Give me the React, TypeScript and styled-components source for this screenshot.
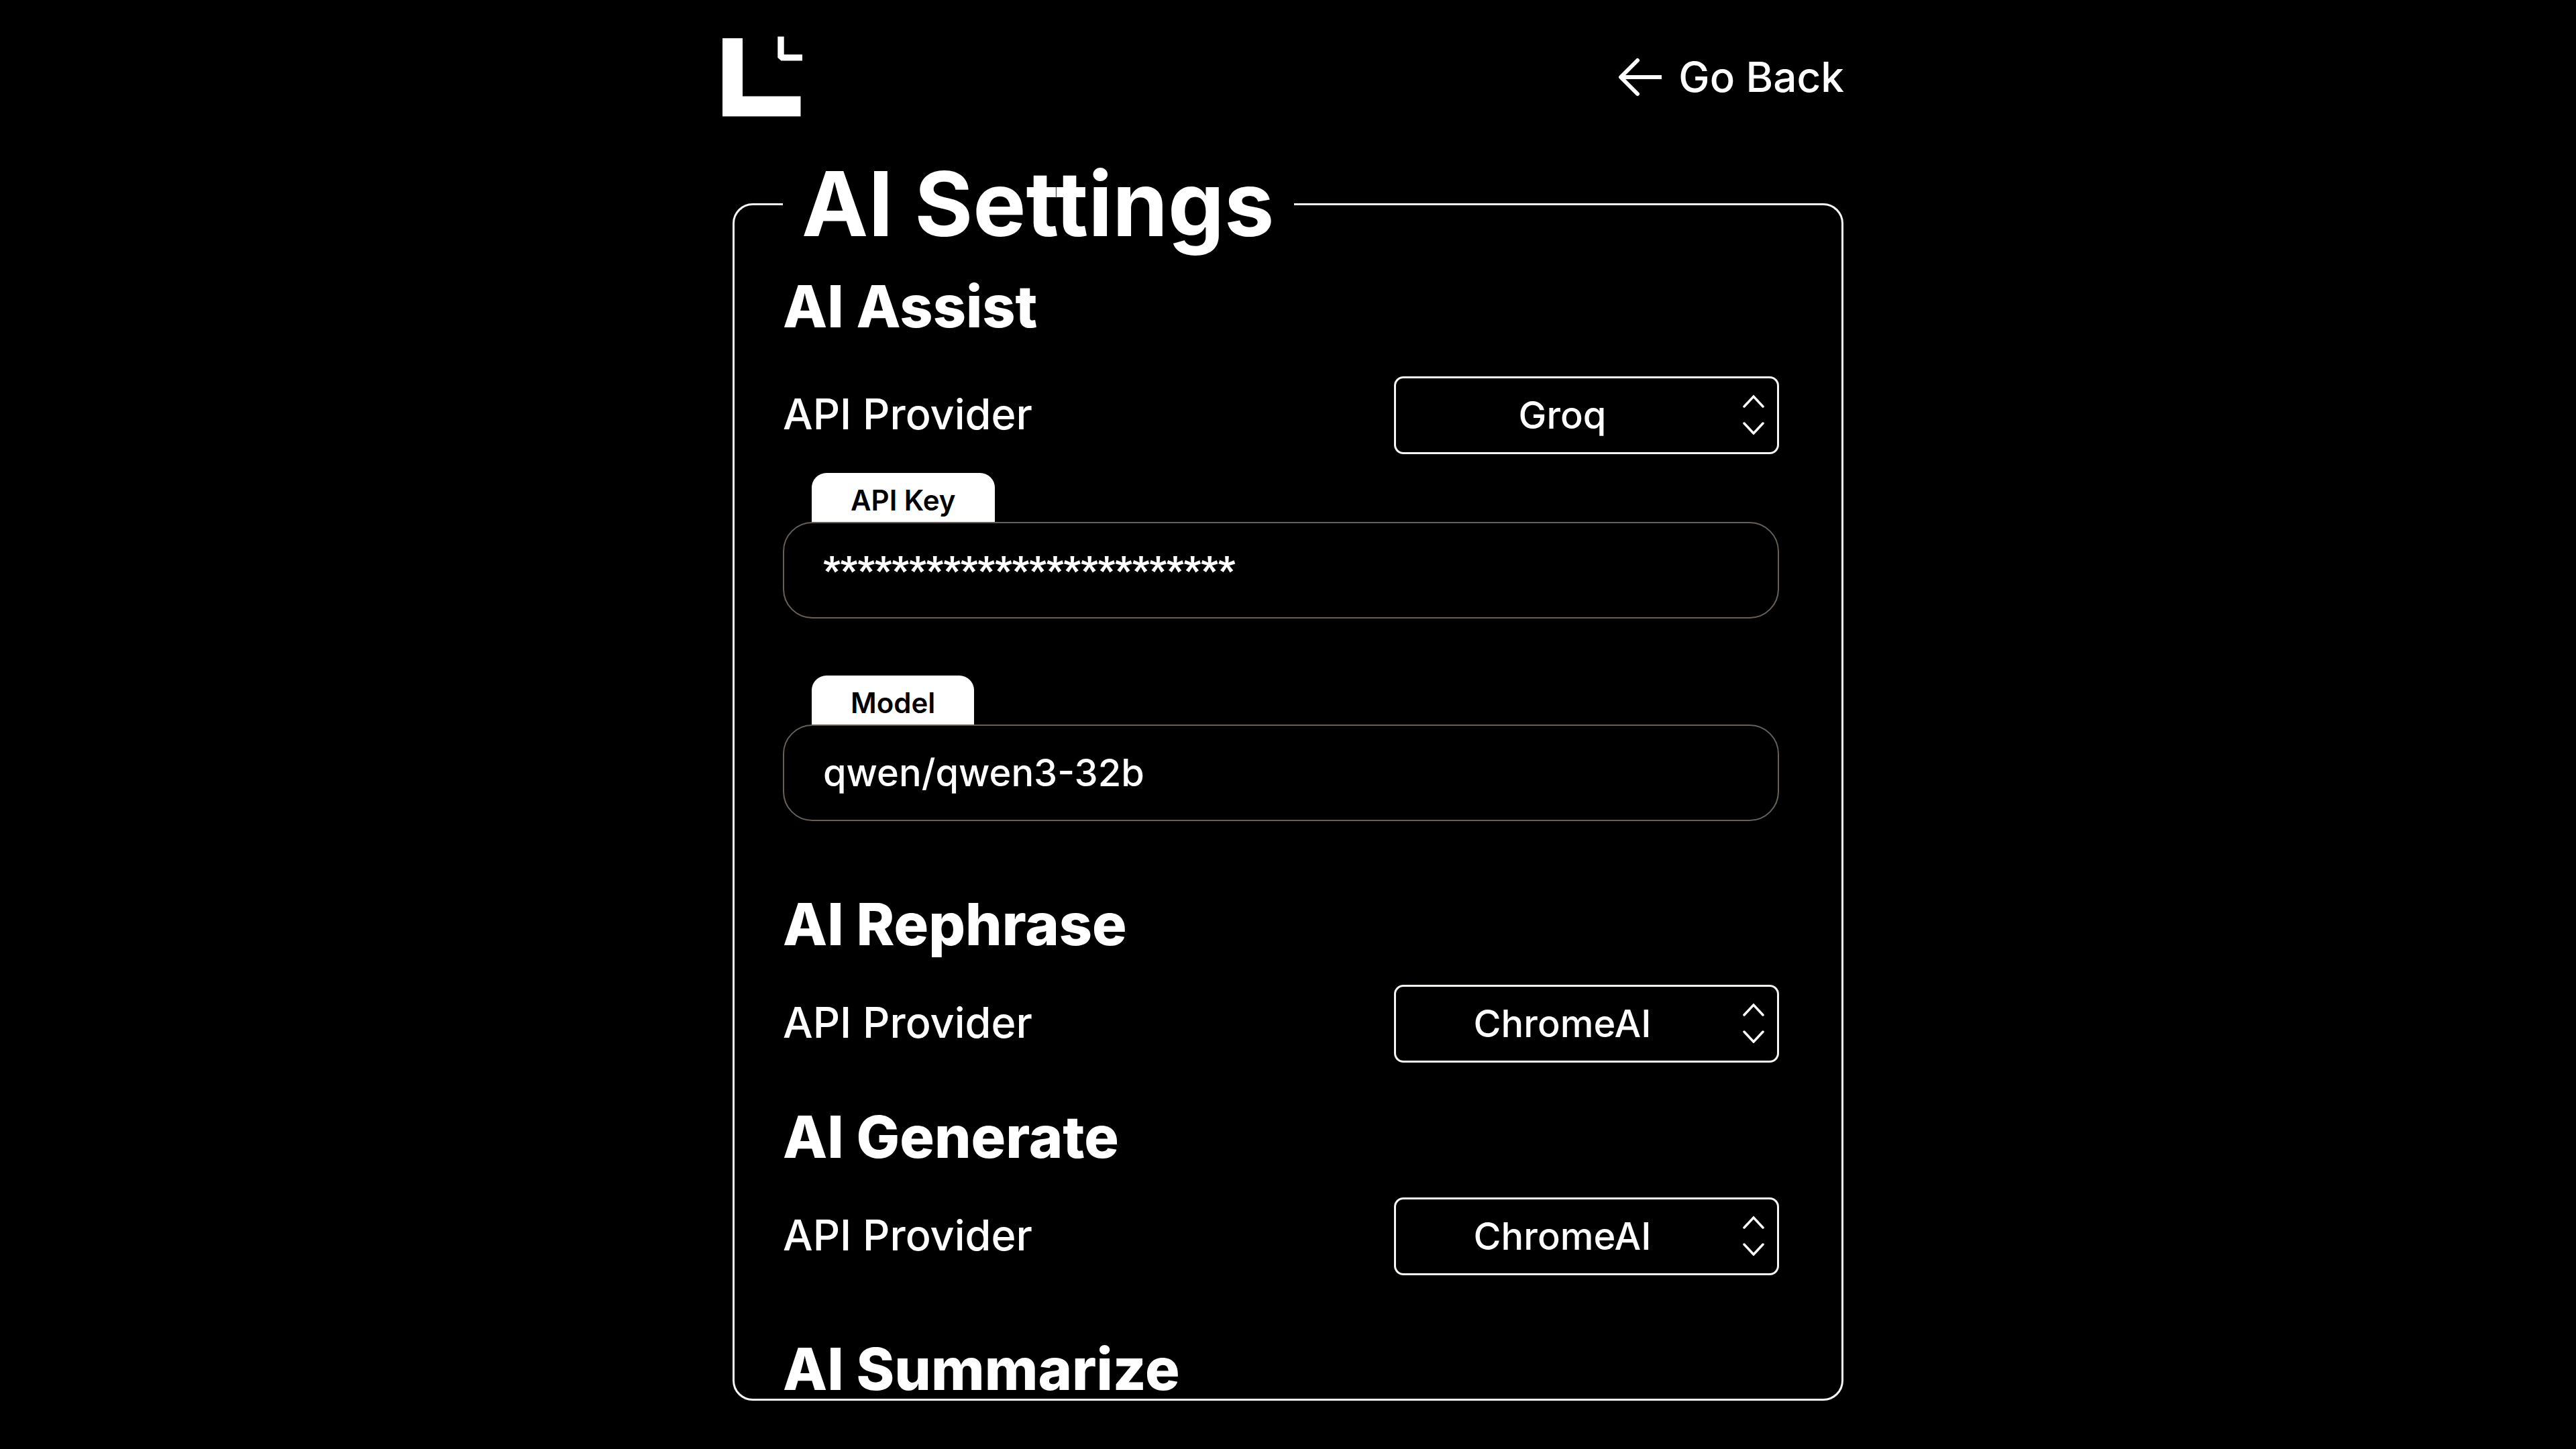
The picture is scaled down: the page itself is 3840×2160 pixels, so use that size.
import React, { useId, useState } from "react";
import styled, { createGlobalStyle } from "styled-components";

const GlobalStyle = createGlobalStyle`
  *, *::before, *::after { box-sizing: border-box; }
  body {
    margin: 0;
    background: #000;
    color: #fff;
    font-family: Inter, Roboto, sans-serif;
  }
`;

const Page = styled.div`
  display: flex;
  flex-direction: column;
  align-items: center;
  height: 100vh;
  padding-bottom: 72px;
  overflow: hidden;
`;

const Header = styled.header`
  display: flex;
  align-items: center;
  justify-content: space-between;
  flex: none;
  width: 100%;
  max-width: 1686px;
  padding: 54px 14px 48px 0;
`;

const LogoLink = styled.a`
  display: flex;
  color: inherit;
`;

const BackButton = styled.button`
  display: flex;
  align-items: center;
  gap: 24px;
  padding: 0;
  border: 0;
  background: none;
  color: inherit;
  font: 500 62px/80px Inter, Roboto, sans-serif;
  cursor: pointer;
`;

const Frame = styled.fieldset`
  display: flex;
  flex-direction: column;
  flex: 1;
  width: 100%;
  max-width: 1656px;
  min-width: 0;
  min-height: 0;
  margin: 0;
  padding: 0 0 0 72px;
  border: 3px solid #f6f6f2;
  border-radius: 30px;
`;

const Title = styled.legend`
  padding: 0 29px 0 28px;
  font-size: 133px;
  font-weight: 700;
  line-height: 160px;
`;

const ScrollArea = styled.div`
  flex: 1;
  min-height: 0;
  padding: 28px 93px 0 0;
  overflow-y: auto;
  scrollbar-width: none;
`;

const Section = styled.section<{ $after: number }>`
  padding-bottom: ${(p) => p.$after}px;
`;

const Heading = styled.h2<{ $gap?: number }>`
  margin: 0 0 ${(p) => p.$gap ?? 45}px;
  font-size: 86px;
  font-weight: 800;
  line-height: 90px;
`;

const Row = styled.div`
  display: flex;
  align-items: center;
  justify-content: space-between;
`;

const RowLabel = styled.label`
  padding-bottom: 4px;
  font-size: 63px;
  font-weight: 500;
  line-height: 80px;
`;

const SelectWrap = styled.div`
  position: relative;
  width: 574px;
`;

const Select = styled.select`
  display: block;
  width: 100%;
  height: 116px;
  padding: 0 72px 0 0;
  border: 3px solid #f6f6f2;
  border-radius: 14px;
  appearance: none;
  background: #000;
  color: #fff;
  font: 500 56px/72px Inter, Roboto, sans-serif;
  text-align: center;
  text-align-last: center;
`;

const Chevrons = styled.svg`
  position: absolute;
  top: 27px;
  right: 22px;
  pointer-events: none;
`;

const Fields = styled.div`
  display: flex;
  flex-direction: column;
  gap: 85px;
  padding-top: 28px;
`;

const Field = styled.div`
  display: flex;
  flex-direction: column;
  align-items: flex-start;
`;

const Tab = styled.label`
  margin-left: 43px;
  padding: 15px 58px 6px;
  border-radius: 22px 22px 0 0;
  background: #fff;
  color: #000;
  font-size: 42px;
  font-weight: 600;
  line-height: 52px;
`;

const TextInput = styled.input<{ $masked?: boolean }>`
  width: 100%;
  height: 144px;
  padding: 0 58px;
  border: 2px solid #686058;
  border-radius: 44px;
  background: #000;
  color: #fff;
  font-family: ${(p) => (p.$masked ? "Roboto" : "Inter")}, sans-serif;
  font-size: ${(p) => (p.$masked ? 55 : 56)}px;
  font-weight: ${(p) => (p.$masked ? 900 : 500)};
`;

const PROVIDERS = ["Groq", "ChromeAI"];

function Logo() {
  return (
    <svg width="120" height="122" viewBox="0 0 120 122" fill="#fff" aria-hidden="true">
      <path d="M0 3h30v86.500h86.500v30H0z" />
      <path d="M82.300 .5h9.400v26.800H119v9.200H87.500l-5.200-4.500z" />
    </svg>
  );
}

function BackArrow() {
  return (
    <svg width="66" height="58" viewBox="0 0 66 58" fill="none" stroke="#fff" strokeWidth="6" aria-hidden="true">
      <path d="M4 29h61" />
      <path d="M29 4 4 29l25 25" strokeLinecap="round" strokeLinejoin="round" />
    </svg>
  );
}

function ProviderRow({ initial }: { initial: string }) {
  const id = useId();
  const [value, setValue] = useState(initial);
  return (
    <Row>
      <RowLabel htmlFor={id}>API Provider</RowLabel>
      <SelectWrap>
        <Select id={id} value={value} onChange={(e) => setValue(e.target.value)}>
          {PROVIDERS.map((p) => (
            <option key={p}>{p}</option>
          ))}
        </Select>
        <Chevrons width="32" height="60" viewBox="0 0 32 60" fill="none" stroke="#fff" strokeWidth="3.500" strokeLinecap="round">
          <path d="M2 18 16 3l14 15M2 43l14 15 14-15" />
        </Chevrons>
      </SelectWrap>
    </Row>
  );
}

function TabbedField({ label, initial, masked }: { label: string; initial: string; masked?: boolean }) {
  const id = useId();
  const [value, setValue] = useState(initial);
  return (
    <Field>
      <Tab htmlFor={id}>{label}</Tab>
      <TextInput id={id} type="text" $masked={masked} value={value} onChange={(e) => setValue(e.target.value)} />
    </Field>
  );
}

export default function App() {
  return (
    <Page>
      <GlobalStyle />
      <Header>
        <LogoLink href="#" aria-label="Home">
          <Logo />
        </LogoLink>
        <BackButton type="button">
          <BackArrow />
          Go Back
        </BackButton>
      </Header>
      <Frame>
        <Title>AI Settings</Title>
        <ScrollArea>
          <Section $after={109}>
            <Heading $gap={59}>AI Assist</Heading>
            <ProviderRow initial="Groq" />
            <Fields>
              <TabbedField label="API Key" initial={"*".repeat(24)} masked />
              <TabbedField label="Model" initial="qwen/qwen3-32b" />
            </Fields>
          </Section>
          <Section $after={66}>
            <Heading>AI Rephrase</Heading>
            <ProviderRow initial="ChromeAI" />
          </Section>
          <Section $after={95}>
            <Heading>AI Generate</Heading>
            <ProviderRow initial="ChromeAI" />
          </Section>
          <Heading $gap={0}>AI Summarize</Heading>
        </ScrollArea>
      </Frame>
    </Page>
  );
}
